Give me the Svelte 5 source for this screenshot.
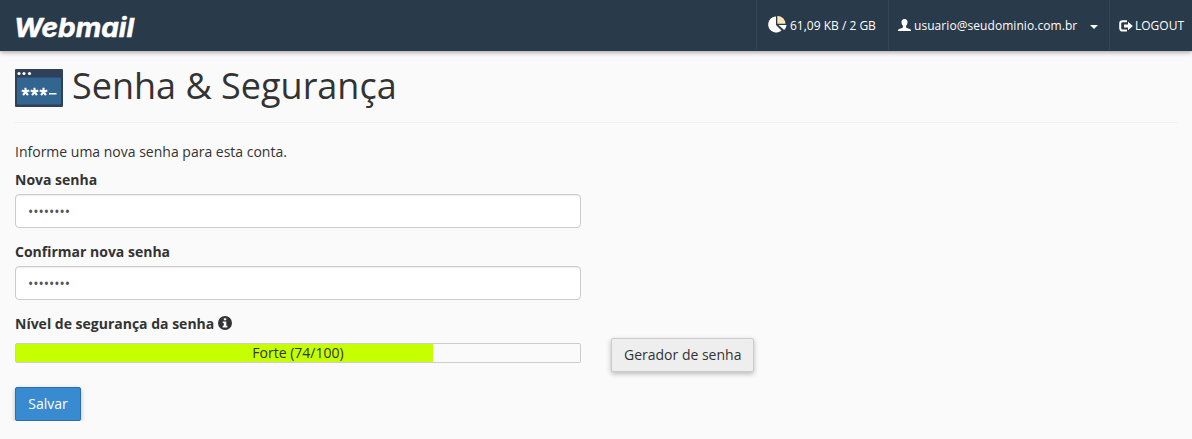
<script lang="ts">
  let password = 'abcd1234'
  let confirmation = 'abcd1234'
  let strength = 74
</script>

<header class="navbar">
  <a class="brand" href="#home" aria-label="Webmail">
    <svg width="130" height="36" viewBox="0 0 130 36">
      <text x="-1" y="26.500" textLength="120" lengthAdjust="spacingAndGlyphs">Webmail</text>
    </svg>
  </a>

  <nav>
    <a class="item quota" href="#quota">
      <svg width="19" height="17" viewBox="0 0 19 17" fill="#fff">
        <path d="M8 .500v8.500l5.500 5.500A8 8 0 1 1 8 .500z" />
        <path d="M9.300 0a8 8 0 0 1 8.200 7.800H9.300z" fill="#fce6b8" />
        <path d="M10.500 9H18.600a8 8 0 0 1-2.500 5z" />
      </svg>
      <span>61,09 KB / 2 GB</span>
    </a>
    <a class="item user" href="#account">
      <svg width="13" height="12" viewBox="0 0 13 12" fill="#fff">
        <path d="M6.500 0C8.600 0 9.700 1.300 9.500 3.400 9.400 5 8.800 6.100 8 6.800v1.100c0 .5.300.8.800 1l3 1.100c.8.300 1.200.8 1.200 2H0c0-1.200.4-1.700 1.200-2l3-1.100c.5-.2.8-.5.8-1V6.800C4.200 6.100 3.600 5 3.500 3.400 3.300 1.300 4.400 0 6.500 0z" />
      </svg>
      <span>usuario@seudominio.com.br</span>
      <i class="caret"></i>
    </a>
    <a class="item logout" href="#logout">
      <svg width="14" height="12" viewBox="0 0 14 12">
        <path d="M8 1.200H3.500A2.300 2.300 0 0 0 1.200 3.500v4.800a2.300 2.300 0 0 0 2.300 2.300H8" fill="none" stroke="#fff" stroke-width="2" />
        <path d="M5 4.400h4V1.700L13.800 6 9 10.200V7.500H5z" fill="#fff" />
      </svg>
      <span>LOGOUT</span>
    </a>
  </nav>
</header>

<main>
  <h1>
    <svg width="48" height="38" viewBox="0 0 48 38">
      <rect width="48" height="38" rx="1" fill="#2f4059" />
      <rect x="2" y="8.500" width="44" height="27" rx="1" fill="#336591" />
      <g fill="#fff">
        <circle cx="4" cy="4.500" r="1.600" />
        <circle cx="9" cy="4.500" r="1.600" />
        <circle cx="14.500" cy="4.500" r="1.600" />
        <rect x="34" y="24" width="7.500" height="1.500" />
      </g>
      <g stroke="#fff" stroke-width="2.100">
        {#each [10.500, 19.500, 28.500] as x}
          <path d="M{x} 22.800v-4M{x} 22.800l3.800-1.200M{x} 22.800l2.400 3.400M{x} 22.800l-2.400 3.400M{x} 22.800l-3.800-1.200" />
        {/each}
      </g>
    </svg>
    <span>Senha &amp; Segurança</span>
  </h1>

  <p>Informe uma nova senha para esta conta.</p>

  <form>
    <label for="password">Nova senha</label>
    <input id="password" type="password" bind:value={password} />

    <label for="confirmation">Confirmar nova senha</label>
    <input id="confirmation" type="password" bind:value={confirmation} />

    <div class="label">
      Nível de segurança da senha
      <svg width="14" height="14" viewBox="0 0 14 14">
        <circle cx="7" cy="7" r="7" fill="#333" />
        <path d="M5.800 2.200h2.500v2H5.800zM4.700 5.400h3.600v4.400h1.100v1.600H4.700V9.800h1.100V7H4.700z" fill="#fafafa" />
      </svg>
    </div>

    <div class="strength">
      <div class="meter">
        <div class="fill" style="width: {strength}%"></div>
        <span>Forte ({strength}/100)</span>
      </div>
      <button class="btn" type="button">Gerador de senha</button>
    </div>

    <button class="btn primary" type="button">Salvar</button>
  </form>
</main>

<style>
  :global(body) {
    background: #fafafa;
    color: #333;
    font: 14px/20px "Open Sans", sans-serif;
  }

  .navbar {
    display: flex;
    justify-content: space-between;
    height: 51px;
    background: #293a4a;
    box-shadow: 0 1px 5px rgba(0, 0, 0, .4);
  }

  .brand {
    padding: 10px 0 0 15px;
  }

  .brand svg {
    overflow: visible;
  }

  .brand text {
    fill: #fff;
    stroke: #fff;
    stroke-width: .5;
    font: italic 700 26px Inter, sans-serif;
  }

  nav {
    display: flex;
    height: 50px;
  }

  .item {
    display: flex;
    align-items: center;
    box-sizing: border-box;
    padding-top: 1px;
    border-left: 1px solid #344656;
    color: #fff;
    font-size: 12px;
    text-decoration: none;
    white-space: nowrap;
  }

  .item span {
    padding-top: 1px;
  }

  .quota {
    width: 132px;
    padding-left: 11px;
    gap: 3px;
  }

  .quota svg {
    margin-top: -2px;
  }

  .user {
    width: 221px;
    padding-left: 9px;
    gap: 3px;
  }

  .user span {
    letter-spacing: .06px;
  }

  .user svg {
    margin-top: -1px;
  }

  .logout {
    width: 83px;
    padding-left: 9px;
    gap: 2px;
  }

  .caret {
    margin: 2px 0 0 10px;
    border: 4px solid transparent;
    border-top-color: #fff;
    border-bottom: 0;
  }

  main {
    padding: 0 15px;
  }

  h1 {
    display: flex;
    box-sizing: border-box;
    height: 72px;
    margin: 0 0 19px;
    padding-top: 15px;
    gap: 9px;
    border-bottom: 1px solid #eee;
    font-size: 36px;
    font-weight: 400;
    line-height: 40px;
  }

  h1 svg {
    margin-top: 3px;
  }

  p {
    margin: 0 0 8px;
  }

  label,
  .label {
    display: block;
    margin-bottom: 4px;
    font-weight: 700;
  }

  .label svg {
    vertical-align: -1px;
  }

  input {
    display: block;
    box-sizing: border-box;
    width: 566px;
    height: 34px;
    margin-bottom: 14px;
    padding: 6px 12px;
    border: 1px solid #ccc;
    border-radius: 4px;
    background: #fff;
    box-shadow: inset 0 1px 1px rgba(0, 0, 0, .075);
    color: #555;
    font: inherit;
  }

  .strength {
    display: flex;
    align-items: center;
    gap: 30px;
    margin-bottom: 15px;
  }

  .meter {
    display: grid;
    box-sizing: border-box;
    width: 566px;
    height: 20px;
    margin-top: -4px;
    border: 1px solid #ccc;
    border-radius: 2px;
    line-height: 18px;
    text-align: center;
  }

  .fill,
  .meter span {
    grid-area: 1 / 1;
  }

  .fill {
    background: #c6ff00;
  }

  .btn {
    height: 34px;
    padding: 0 12px;
    border: 1px solid #ccc;
    border-radius: 2px;
    background: #eee;
    box-shadow: 0 2px 5px rgba(0, 0, 0, .26);
    color: #333;
    font: inherit;
  }

  .primary {
    width: 66px;
    border-color: #2a6db0;
    background: #388bd0;
    color: #fff;
  }
</style>
